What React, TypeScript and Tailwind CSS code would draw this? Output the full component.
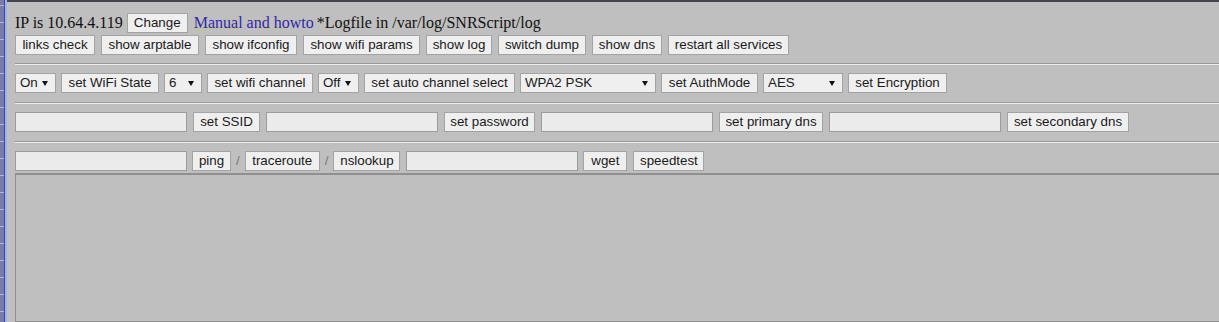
import React from 'react';

const btn =
  'h-[20px] shrink-0 border border-[#a3a3a3] bg-[#efefef] text-[13.33px] leading-none text-[#1a1a1a] flex items-center justify-center whitespace-nowrap';
const inp = 'h-[20px] w-[172px] shrink-0 border border-[#9c9c9c] bg-[#ebebeb] outline-none';

const Btn = ({ label, w }: { label: string; w: string }) => (
  <button className={`${btn} ${w}`}>{label}</button>
);

const Select = ({ value, w }: { value: string; w: string }) => (
  <div
    className={`h-[20px] shrink-0 border border-[#a3a3a3] bg-[#efefef] text-[13.33px] text-[#1a1a1a] flex items-center pl-[4px] pr-[7px] ${w}`}
  >
    <span className="leading-none">{value}</span>
    <svg className="ml-auto" width="6" height="5" viewBox="0 0 6 5">
      <polygon points="0,0 6,0 3,5" fill="#111" />
    </svg>
  </div>
);

const Rule = () => (
  <div className="mt-[9px] mb-[8px] border-t border-b border-t-[#999999] border-b-[#ececec]" />
);

const Slash = () => <span className="shrink-0 text-[13.33px] text-[#7a7a7a] leading-none">/</span>;

export default function App() {
  return (
    <div className="flex h-screen w-full overflow-hidden bg-[#bfbfbf]" style={{ fontFamily: '"Liberation Sans", Arial, sans-serif' }}>
      {/* window edge strip */}
      <div className="flex shrink-0">
        <svg width="4" height="100%" className="block h-full">
          <defs>
            <pattern id="ticks" width="4" height="17" patternUnits="userSpaceOnUse">
              <rect width="4" height="17" fill="#7b7ba8" />
              <rect y="5" width="4" height="1" fill="#b4b4d8" />
            </pattern>
          </defs>
          <rect width="4" height="100%" fill="url(#ticks)" />
        </svg>
        <div className="w-[1px] bg-[#2c48c8]" />
        <div className="w-[2px] bg-[#a2b3e4]" />
      </div>

      <div className="flex min-w-0 flex-1 flex-col border-t-2 border-[#45454f] pt-[11px] pl-[8px]">
        {/* status line */}
        <div className="flex h-[20px] items-center text-[16px] text-[#111]" style={{ fontFamily: '"Liberation Serif", "Times New Roman", serif' }}>
          <span className="whitespace-nowrap">IP is 10.64.4.119</span>
          <button className={`${btn} ml-[4px] w-[61px]`} style={{ fontFamily: '"Liberation Sans", Arial, sans-serif' }}>
            Change
          </button>
          <a className="ml-[6px] whitespace-nowrap text-[#3326a8]">Manual and howto</a>
          <span className="ml-[3px] whitespace-nowrap">*Logfile in /var/log/SNRScript/log</span>
        </div>

        <div className="mt-[2px] flex h-[19px] gap-[6px]">
          <Btn label="links check" w="w-[80px] h-[19px]" />
          <Btn label="show arptable" w="w-[98px] h-[19px]" />
          <Btn label="show ifconfig" w="w-[92px] h-[19px]" />
          <Btn label="show wifi params" w="w-[117px] h-[19px]" />
          <Btn label="show log" w="w-[66px] h-[19px]" />
          <Btn label="switch dump" w="w-[88px] h-[19px]" />
          <Btn label="show dns" w="w-[70px] h-[19px]" />
          <Btn label="restart all services" w="w-[121px] h-[19px]" />
        </div>

        <Rule />

        {/* wifi settings */}
        <div className="flex gap-[5px]">
          <Select value="On" w="w-[41px]" />
          <Btn label="set WiFi State" w="w-[98px]" />
          <Select value="6" w="w-[38px]" />
          <Btn label="set wifi channel" w="w-[106px]" />
          <Select value="Off" w="w-[41px]" />
          <Btn label="set auto channel select" w="w-[151px]" />
          <Select value="WPA2 PSK" w="w-[136px]" />
          <Btn label="set AuthMode" w="w-[97px]" />
          <Select value="AES" w="w-[80px]" />
          <Btn label="set Encryption" w="w-[99px]" />
        </div>

        <Rule />

        <div className="flex gap-[6px]">
          <input className={inp} />
          <Btn label="set SSID" w="w-[67px]" />
          <input className={inp} />
          <Btn label="set password" w="w-[91px]" />
          <input className={inp} />
          <Btn label="set primary dns" w="w-[104px]" />
          <input className={inp} />
          <Btn label="set secondary dns" w="w-[122px]" />
        </div>

        <Rule />

        {/* tools */}
        <div className="flex items-center gap-[5px]">
          <input className={inp} />
          <Btn label="ping" w="w-[39px]" />
          <Slash />
          <Btn label="traceroute" w="w-[75px]" />
          <Slash />
          <Btn label="nslookup" w="w-[67px]" />
          <input className={`${inp} ml-[1px]`} />
          <Btn label="wget" w="w-[44px]" />
          <Btn label="speedtest" w="w-[71px] ml-[1px]" />
        </div>

        <textarea className="mt-[2px] w-[1230px] flex-1 resize-none border border-[#8f8f8f] border-t-2 bg-transparent outline-none" />
      </div>
    </div>
  );
}
